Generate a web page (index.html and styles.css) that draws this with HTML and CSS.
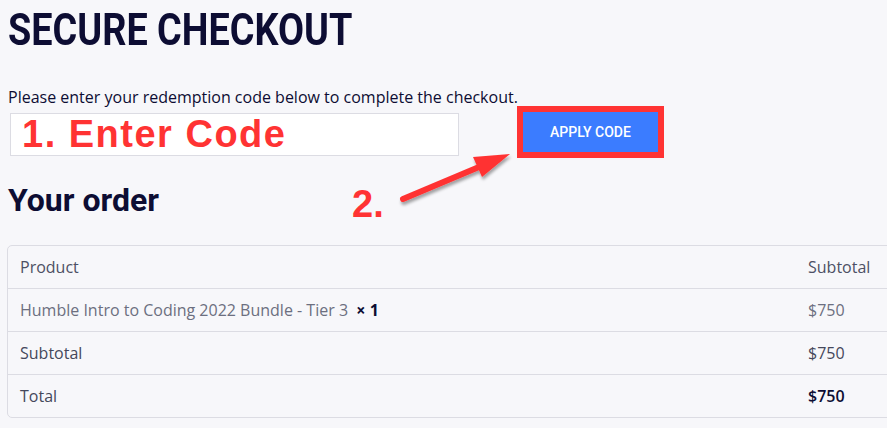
FILE: index.html
```html
<!DOCTYPE html>
<html lang="en">
<head>
    <meta charset="UTF-8">
    <meta name="viewport" content="width=device-width, initial-scale=1.0">
    <title>Secure Checkout</title>
    <link rel="stylesheet" href="styles.css">
</head>
<body>
    <h1 class="page-title">SECURE CHECKOUT</h1>

    <p class="intro">Please enter your redemption code below to complete the checkout.</p>

    <div class="coupon-row">
        <div class="coupon-input">1. Enter Code</div>
        <button class="apply-btn">APPLY CODE</button>
    </div>

    <h2 class="order-title">Your order</h2>

    <!-- step 2 annotation -->
    <span class="step-two">2.</span>
    <svg class="step-arrow" width="130" height="70" viewBox="0 0 130 70">
        <defs>
            <filter id="shadow" x="-20%" y="-20%" width="140%" height="160%">
                <feDropShadow dx="1" dy="3" stdDeviation="1.5" flood-color="#000" flood-opacity="0.35"/>
            </filter>
        </defs>
        <g filter="url(#shadow)">
            <line x1="10" y1="55" x2="86" y2="23" stroke="#ff3333" stroke-width="6" stroke-linecap="round"/>
            <polygon points="117,10 80,13 89,33" fill="#ff3333"/>
        </g>
    </svg>

    <div class="order-box">
        <table class="order-table">
            <thead>
                <tr>
                    <th>Product</th>
                    <th class="col-total">Subtotal</th>
                </tr>
            </thead>
            <tbody>
                <tr class="item">
                    <td>Humble Intro to Coding 2022 Bundle - Tier 3 &nbsp;<strong class="qty">&times;&nbsp;1</strong></td>
                    <td class="col-total">$750</td>
                </tr>
                <tr class="sum">
                    <td>Subtotal</td>
                    <td class="col-total">$750</td>
                </tr>
                <tr class="sum total">
                    <td>Total</td>
                    <td class="col-total"><strong>$750</strong></td>
                </tr>
            </tbody>
        </table>
    </div>
</body>
</html>
```

FILE: styles.css
```css
html, body {
    overflow: hidden;
}
body {
    margin: 0;
    padding: 0 8px;
    background-color: #f7f7fa;
    color: #0d0d33;
    font-family: "Open Sans", sans-serif;
    position: relative;
    height: 428px;
}
.page-title {
    font-family: Roboto, sans-serif;
    font-weight: 700;
    font-size: 45px;
    line-height: 52px;
    margin: 4px 0 0;
    display: inline-block;
    transform: scaleX(0.84);
    transform-origin: left center;
}
.intro {
    font-size: 16px;
    line-height: 20px;
    margin: 31px 0 0;
}
.coupon-row {
    display: flex;
    align-items: flex-start;
    margin-top: 6px;
}
.coupon-input {
    width: 436px;
    height: 41px;
    margin-left: 2px;
    background: #fff;
    border: 1px solid #dcdce3;
    color: #ff3333;
    font-family: "Liberation Sans", Arial, sans-serif;
    font-weight: 700;
    font-size: 38px;
    letter-spacing: 1.5px;
    line-height: 41px;
    padding-left: 11px;
}
.apply-btn {
    margin-left: 64px;
    margin-top: -1px;
    width: 135px;
    height: 40px;
    border: none;
    background: #3b7cff;
    color: #fff;
    font-family: Roboto, sans-serif;
    font-weight: 500;
    font-size: 14px;
    outline: 6px solid #ff3333;
}
.order-title {
    font-family: Roboto, sans-serif;
    font-weight: 700;
    font-size: 32px;
    line-height: 40px;
    margin: 24px 0 0;
}
.step-two {
    position: absolute;
    left: 352px;
    top: 182px;
    color: #ff3333;
    font-family: "Liberation Sans", Arial, sans-serif;
    font-weight: 700;
    font-size: 38px;
    line-height: 44px;
}
.step-arrow {
    position: absolute;
    left: 393px;
    top: 144px;
}
.order-box {
    width: 900px;
    margin: 25px 0 0 -1px;
    border: 1px solid #dcdce3;
    border-radius: 5px;
    overflow: hidden;
}
.order-table {
    width: 100%;
    border-collapse: collapse;
    font-size: 16px;
}
.order-table th,
.order-table td {
    height: 42px;
    padding: 0 12px;
    text-align: left;
    vertical-align: middle;
    border-top: 1px solid #dcdce3;
}
.order-table thead th {
    border-top: none;
    font-weight: 400;
    color: #4d5064;
}
.order-table .col-total {
    width: 88px;
}
.item td {
    color: #6c6f80;
}
.qty {
    color: #0d0d33;
    font-weight: 700;
}
.sum td {
    color: #45485b;
}
.total strong {
    color: #0d0d33;
    font-weight: 600;
}
```
